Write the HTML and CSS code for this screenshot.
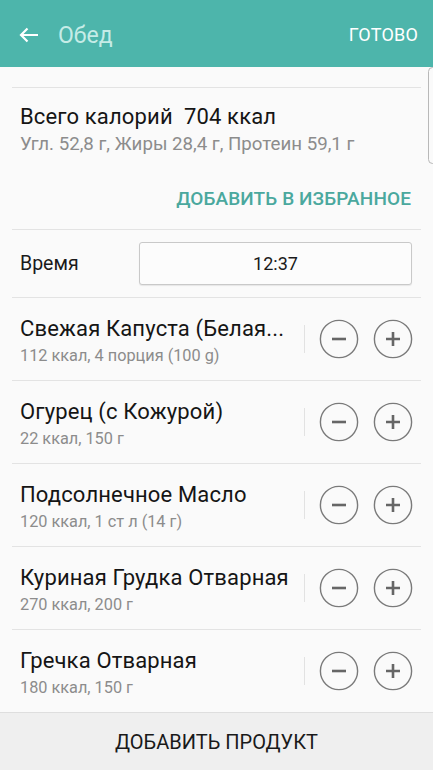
FILE: index.html
```html
<!DOCTYPE html>
<html lang="ru">
<head>
<meta charset="utf-8">
<link rel="stylesheet" href="styles.css">
</head>
<body>
<div class="app">
  <header class="appbar">
    <svg class="back" width="20" height="16" viewBox="0 0 20 16"><path d="M19 8H2M8.5 1.5L2 8l6.5 6.5" fill="none" stroke="#fff" stroke-width="2.2"/></svg>
    <div class="title">Обед</div>
    <div class="done">ГОТОВО</div>
  </header>
  <div class="scrollbar"></div>
  <main class="content">
    <div class="topgap"></div>
    <section class="summary">
      <div class="total">Всего калорий&nbsp;&nbsp;704 ккал</div>
      <div class="macros">Угл. 52,8 г, Жиры 28,4 г, Протеин 59,1 г</div>
      <div class="fav">ДОБАВИТЬ В ИЗБРАННОЕ</div>
    </section>
    <section class="timerow">
      <div class="tlabel">Время</div>
      <div class="tinput">12:37</div>
    </section>
    <section class="item">
      <div class="info"><div class="name">Свежая Капуста (Белая...</div><div class="sub">112 ккал, 4 порция (100 g)</div></div>
      <div class="sep"></div>
      <div class="btn"><svg viewBox="0 0 40 40"><circle cx="20" cy="20" r="18.6" fill="none" stroke="#7a7a7a" stroke-width="1.4"/><path d="M13 20h14" stroke="#666" stroke-width="2.6"/></svg></div>
      <div class="btn"><svg viewBox="0 0 40 40"><circle cx="20" cy="20" r="18.6" fill="none" stroke="#7a7a7a" stroke-width="1.4"/><path d="M13 20h14M20 13v14" stroke="#666" stroke-width="2.6"/></svg></div>
    </section>
    <section class="item">
      <div class="info"><div class="name">Огурец (с Кожурой)</div><div class="sub">22 ккал, 150 г</div></div>
      <div class="sep"></div>
      <div class="btn"><svg viewBox="0 0 40 40"><circle cx="20" cy="20" r="18.6" fill="none" stroke="#7a7a7a" stroke-width="1.4"/><path d="M13 20h14" stroke="#666" stroke-width="2.6"/></svg></div>
      <div class="btn"><svg viewBox="0 0 40 40"><circle cx="20" cy="20" r="18.6" fill="none" stroke="#7a7a7a" stroke-width="1.4"/><path d="M13 20h14M20 13v14" stroke="#666" stroke-width="2.6"/></svg></div>
    </section>
    <section class="item">
      <div class="info"><div class="name">Подсолнечное Масло</div><div class="sub">120 ккал, 1 ст л (14 г)</div></div>
      <div class="sep"></div>
      <div class="btn"><svg viewBox="0 0 40 40"><circle cx="20" cy="20" r="18.6" fill="none" stroke="#7a7a7a" stroke-width="1.4"/><path d="M13 20h14" stroke="#666" stroke-width="2.6"/></svg></div>
      <div class="btn"><svg viewBox="0 0 40 40"><circle cx="20" cy="20" r="18.6" fill="none" stroke="#7a7a7a" stroke-width="1.4"/><path d="M13 20h14M20 13v14" stroke="#666" stroke-width="2.6"/></svg></div>
    </section>
    <section class="item">
      <div class="info"><div class="name">Куриная Грудка Отварная</div><div class="sub">270 ккал, 200 г</div></div>
      <div class="sep"></div>
      <div class="btn"><svg viewBox="0 0 40 40"><circle cx="20" cy="20" r="18.6" fill="none" stroke="#7a7a7a" stroke-width="1.4"/><path d="M13 20h14" stroke="#666" stroke-width="2.6"/></svg></div>
      <div class="btn"><svg viewBox="0 0 40 40"><circle cx="20" cy="20" r="18.6" fill="none" stroke="#7a7a7a" stroke-width="1.4"/><path d="M13 20h14M20 13v14" stroke="#666" stroke-width="2.6"/></svg></div>
    </section>
    <section class="item last">
      <div class="info"><div class="name">Гречка Отварная</div><div class="sub">180 ккал, 150 г</div></div>
      <div class="sep"></div>
      <div class="btn"><svg viewBox="0 0 40 40"><circle cx="20" cy="20" r="18.6" fill="none" stroke="#7a7a7a" stroke-width="1.4"/><path d="M13 20h14" stroke="#666" stroke-width="2.6"/></svg></div>
      <div class="btn"><svg viewBox="0 0 40 40"><circle cx="20" cy="20" r="18.6" fill="none" stroke="#7a7a7a" stroke-width="1.4"/><path d="M13 20h14M20 13v14" stroke="#666" stroke-width="2.6"/></svg></div>
    </section>
  </main>
  <footer class="bottombar">ДОБАВИТЬ ПРОДУКТ</footer>
</div>
</body>
</html>
```
FILE: styles.css
```css
* { box-sizing: border-box; }
html, body { margin: 0; padding: 0; }
body {
  font-family: Roboto, "Noto Sans", sans-serif;
  background: #fafafa;
  color: #1a1a1a;
}
.app {
  position: relative;
  width: 433px;
  height: 770px;
  overflow: hidden;
  display: flex;
  flex-direction: column;
}
.appbar {
  height: 67px;
  flex: none;
  background: #4db5ab;
  display: flex;
  align-items: center;
  padding: 3px 15px 0 19px;
}
.back { flex: none; margin-right: 19px; }
.title {
  flex: 1;
  font-size: 23px;
  color: #c6ece7;
}
.done {
  color: #fff;
  font-size: 18px;
  letter-spacing: 0.2px;
  margin-top: -2px;
}
.scrollbar {
  position: absolute;
  right: -4px;
  top: 67px;
  width: 9px;
  height: 97px;
  border: 1px solid #b8b8b8;
  border-radius: 6px;
  background: #fafafa;
}
.content {
  flex: 1;
  display: flex;
  flex-direction: column;
}
.topgap {
  height: 21px;
  margin: 0 12px;
  border-bottom: 1px solid #e3e3e3;
}
.summary {
  margin: 0 12px;
  padding: 16px 10px 0 8px;
  border-bottom: 1px solid #e3e3e3;
  height: 142px;
}
.total { font-size: 22px; line-height: 26px; color: #151515; letter-spacing: 0.15px; }
.macros { font-size: 18.7px; line-height: 22px; color: #8c8c8c; margin-top: 3px; }
.fav {
  text-align: right;
  margin-top: 33px;
  font-size: 19px;
  line-height: 22px;
  font-weight: 500;
  color: #4aa89e;
  letter-spacing: 0.1px;
}
.timerow {
  margin: 0 12px;
  padding: 0 9px 0 8px;
  height: 68px;
  border-bottom: 1px solid #e3e3e3;
  display: flex;
  align-items: center;
}
.tlabel { width: 119px; font-size: 19.5px; color: #1a1a1a; }
.tinput {
  flex: 1;
  height: 43px;
  border: 1px solid #c9c9c9;
  border-radius: 3px;
  background: #fcfcfc;
  box-shadow: 0 1px 1px rgba(0,0,0,0.08);
  display: flex;
  align-items: center;
  justify-content: center;
  font-size: 18px;
  color: #1a1a1a;
}
.item {
  margin: 0 12px;
  padding: 4px 8px 0 8px;
  height: 83px;
  border-bottom: 1px solid #e3e3e3;
  display: flex;
  align-items: center;
}
.item.last { border-bottom: none; height: 81px; }
.info { flex: 1; min-width: 0; padding-right: 12px; }
.name {
  font-size: 22px;
  line-height: 26px;
  color: #151515;
  letter-spacing: 0.15px;
  white-space: nowrap;
  overflow: hidden;
  text-overflow: ellipsis;
}
.sub { font-size: 16.3px; line-height: 20px; color: #8c8c8c; margin-top: 4px; }
.sep {
  flex: none;
  width: 1px;
  height: 28px;
  background: #e2e2e2;
  margin-right: 14px;
  margin-top: -4px;
}
.btn { flex: none; width: 40px; height: 40px; margin-top: -4px; }
.btn + .btn { margin-left: 14px; }
.btn svg { display: block; width: 40px; height: 40px; }
.bottombar {
  flex: none;
  height: 58px;
  background: #efefef;
  border-top: 1px solid #dedede;
  display: flex;
  align-items: center;
  justify-content: center;
  font-size: 20px;
  color: #1a1a1a;
}
```
